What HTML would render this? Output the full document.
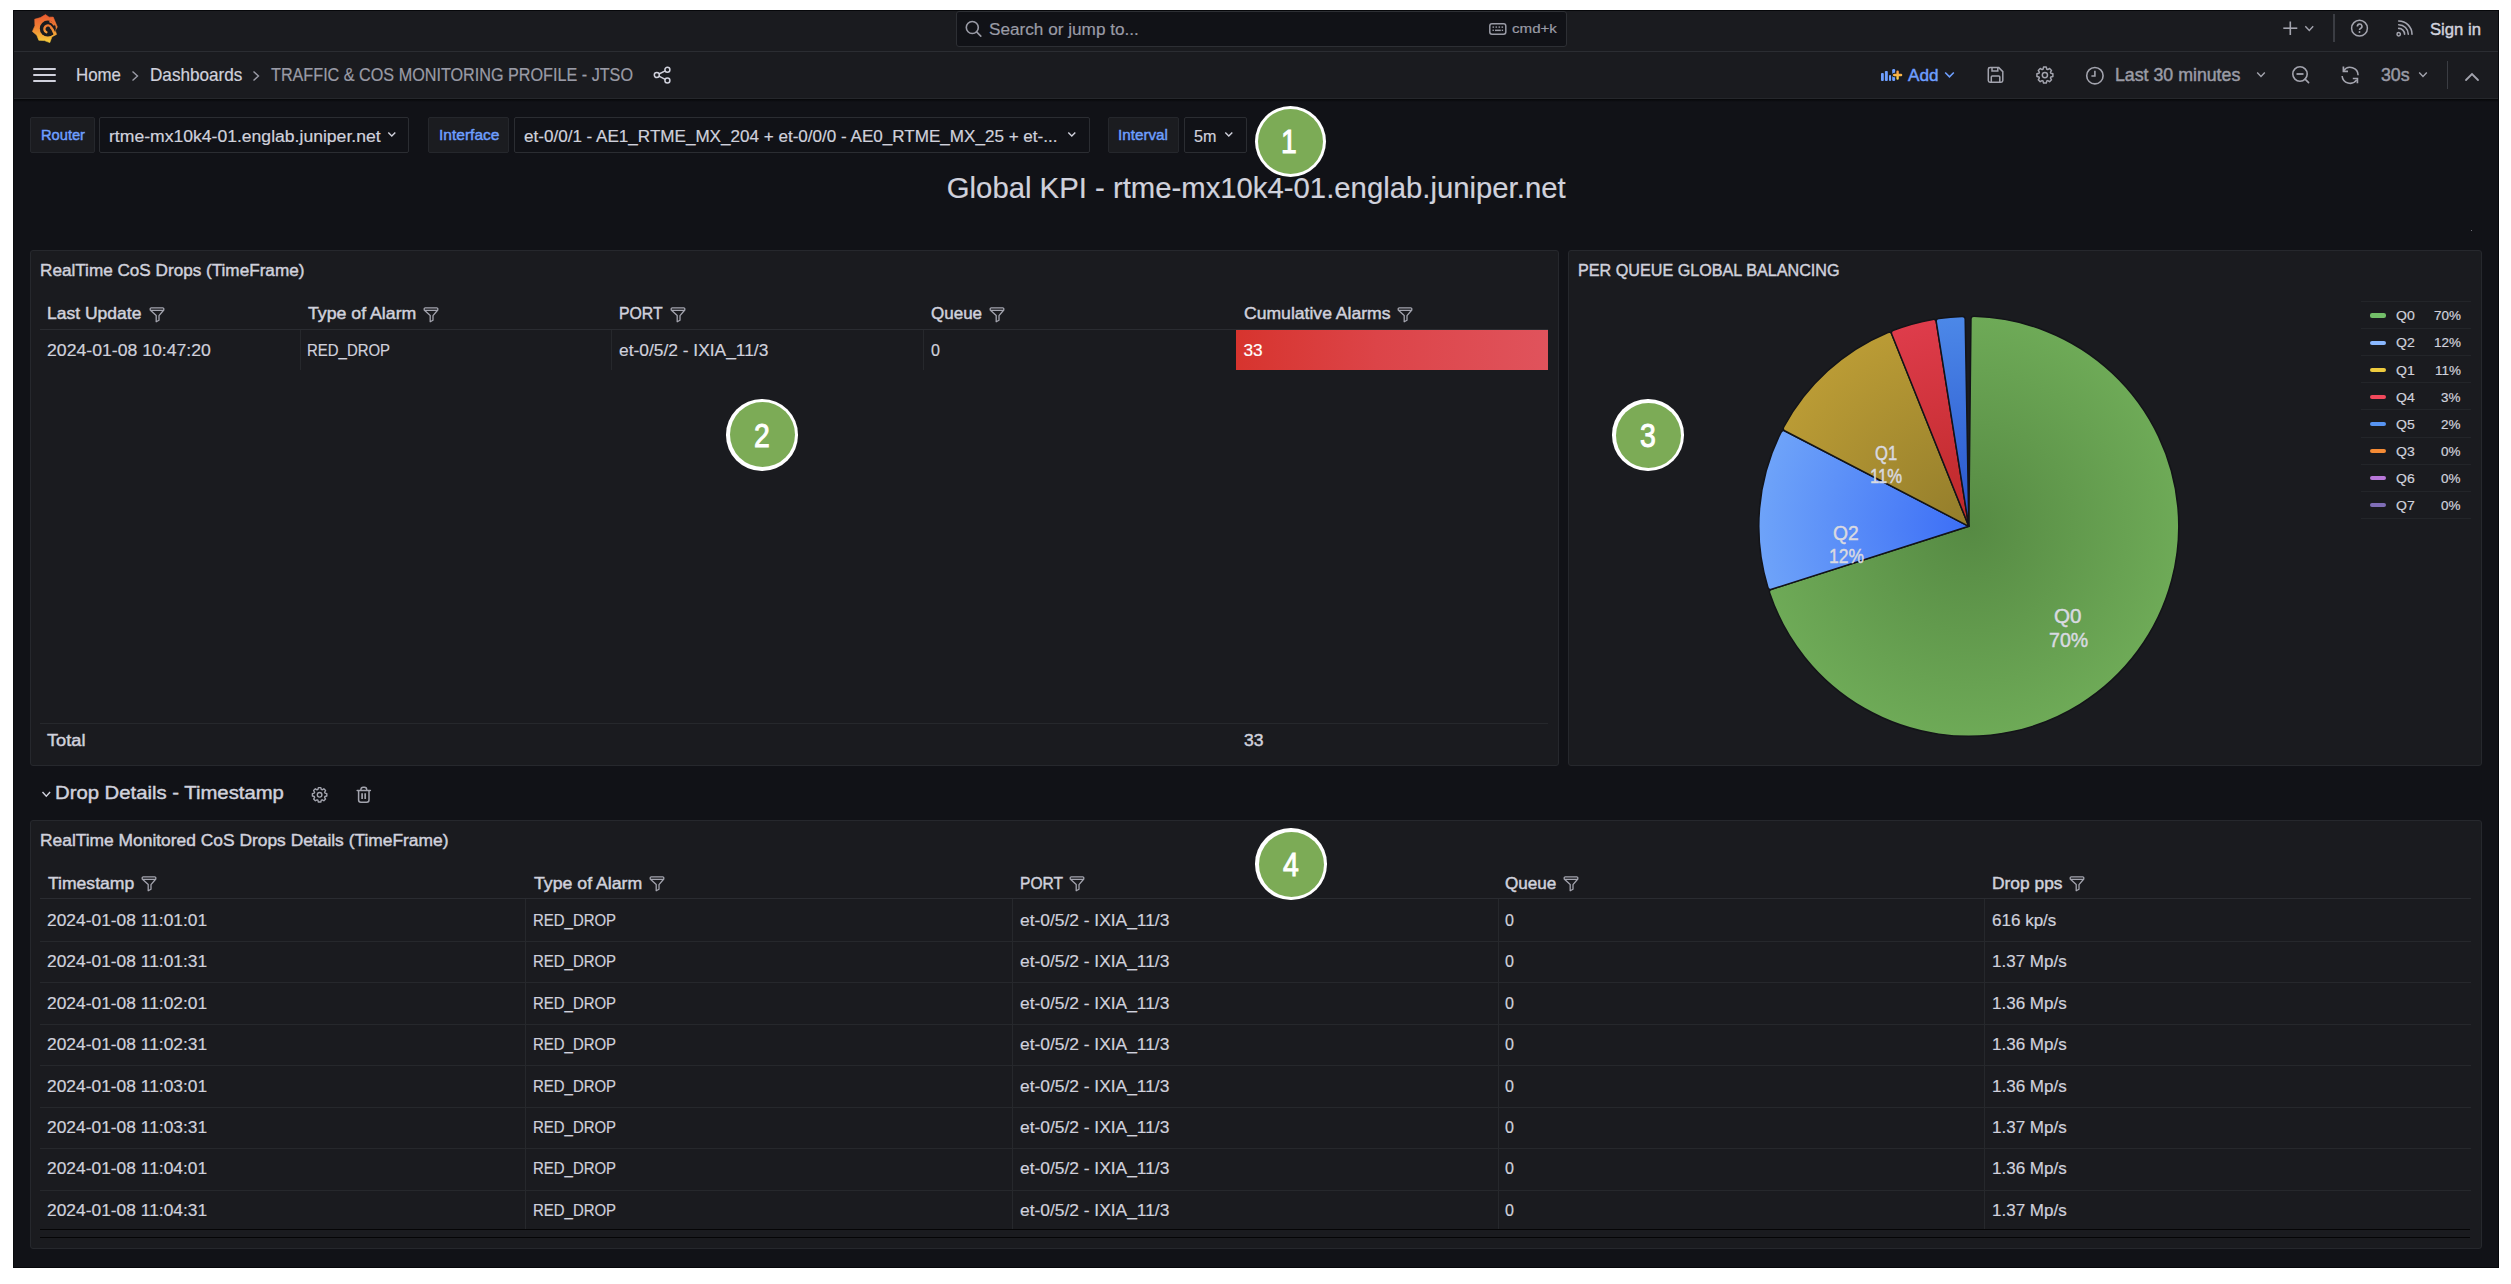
<!DOCTYPE html>
<html><head><meta charset="utf-8"><title>Grafana</title>
<style>
html,body{margin:0;padding:0;background:#ffffff;width:2511px;height:1284px;overflow:hidden;position:relative;font-family:'Liberation Sans', sans-serif;}
.a{position:absolute;}
.t{position:absolute;white-space:pre;transform-origin:0 0;font-family:'Liberation Sans', sans-serif;}
svg.a{overflow:visible;}
</style></head><body>
<div class="a" style="left:13px;top:10px;width:2486px;height:1258px;background:#111217;"></div>
<div class="a" style="left:13px;top:10px;width:2486px;height:41px;background:#1a1b1f;"></div>
<div class="a" style="left:13px;top:51px;width:2486px;height:1px;background:#2b2d32;"></div>
<div class="a" style="left:13px;top:52px;width:2486px;height:46px;background:#1a1b1f;"></div>
<div class="a" style="left:13px;top:98px;width:2486px;height:1px;background:#25272b;"></div>
<div class="a" style="left:13px;top:99px;width:2486px;height:3px;background:linear-gradient(#060709, #111217);"></div>
<svg class="a" style="left:31.5px;top:14px;" width="26" height="29" viewBox="0 0 26 29"><defs><linearGradient id="lg" gradientUnits="userSpaceOnUse" x1="0" y1="0" x2="0" y2="29"><stop offset="0" stop-color="#ea5a30"/><stop offset="0.45" stop-color="#f07f34"/><stop offset="1" stop-color="#f7d23c"/></linearGradient></defs><polygon points="13.50,0.60 17.07,3.15 21.20,3.10 23.25,8.00 25.30,12.90 23.3,16.4 24.50,20.40 19.97,22.82 17.80,28.60 12.45,26.58 6.80,26.30 4.79,21.14 0.40,17.50 2.92,11.74 2.70,5.20 8.48,3.61" fill="url(#lg)" stroke="url(#lg)" stroke-width="0.6" stroke-linejoin="round"/><circle cx="15.8" cy="14.55" r="8.0" fill="#1a1b1f"/><path d="M18.97,13.22 A3.55,3.55 0 1 0 14.40,18.22" fill="none" stroke="url(#lg)" stroke-width="2.3" stroke-linecap="round"/><path d="M18.97,13.2 Q21.2,15.8 22.0,18.6 L23.2,20.6" fill="none" stroke="url(#lg)" stroke-width="2.4"/><path d="M17.32,7.41 A7.3,7.3 0 0 1 22.36,11.35" fill="none" stroke="url(#lg)" stroke-width="1.6"/></svg>
<div class="a" style="left:955.5px;top:11px;width:611px;height:36px;background:#111217;border:1px solid #2d2f34;box-sizing:border-box;border-radius:3px;"></div>
<svg class="a" style="left:965px;top:20px;" width="18" height="18" viewBox="0 0 18 18"><circle cx="7.3" cy="7.5" r="6" fill="none" stroke="#9a9ba6" stroke-width="1.6"/><line x1="11.6" y1="11.9" x2="15.8" y2="16.1" stroke="#9a9ba6" stroke-width="1.6" stroke-linecap="round"/></svg>
<span class="t" style="left:988.90px;top:21.00px;font-size:17.3px;line-height:17.3px;color:#9a9ba6;font-weight:400;-webkit-text-stroke:0.2px #9a9ba6;transform:scaleX(0.9939);">Search or jump to...</span>
<svg class="a" style="left:1488.5px;top:22.5px;" width="18" height="12" viewBox="0 0 18 12"><rect x="0.8" y="0.8" width="16" height="10.4" rx="2.2" fill="none" stroke="#9a9ba6" stroke-width="1.5"/><rect x="3.5" y="3.4" width="1.6" height="1.4" fill="#9a9ba6"/><rect x="6.5" y="3.4" width="1.6" height="1.4" fill="#9a9ba6"/><rect x="9.5" y="3.4" width="1.6" height="1.4" fill="#9a9ba6"/><rect x="12.5" y="3.4" width="1.6" height="1.4" fill="#9a9ba6"/><rect x="3.5" y="6.6" width="1.4" height="1.4" fill="#9a9ba6"/><rect x="6" y="6.6" width="5.8" height="1.5" fill="#9a9ba6"/><rect x="12.7" y="6.6" width="1.4" height="1.4" fill="#9a9ba6"/></svg>
<span class="t" style="left:1511.60px;top:22.00px;font-size:13.5px;line-height:13.5px;color:#9a9ba6;font-weight:400;-webkit-text-stroke:0.2px #9a9ba6;transform:scaleX(1.1186);">cmd+k</span>
<svg class="a" style="left:2282px;top:20px;" width="34" height="17" viewBox="0 0 34 17"><line x1="1.3" y1="8.2" x2="15.3" y2="8.2" stroke="#a3a4ae" stroke-width="1.6"/><line x1="8.3" y1="1.5" x2="8.3" y2="15" stroke="#a3a4ae" stroke-width="1.6"/><polyline points="23.3,6.3 27.3,10.5 31.2,6.3" fill="none" stroke="#a3a4ae" stroke-width="1.4"/></svg>
<div class="a" style="left:2333.4px;top:14px;width:1.3px;height:28px;background:#3b3d43;"></div>
<svg class="a" style="left:2350px;top:19px;" width="19" height="19" viewBox="0 0 19 19"><circle cx="9.5" cy="9.2" r="7.9" fill="none" stroke="#a3a4ae" stroke-width="1.5"/><path d="M7.35,7.4 A2.3,2.3 0 1 1 10.5,9.5 Q9.5,10 9.5,11" fill="none" stroke="#a3a4ae" stroke-width="1.6"/><circle cx="9.5" cy="13.0" r="0.95" fill="#a3a4ae"/></svg>
<svg class="a" style="left:2395px;top:19px;" width="19" height="19" viewBox="0 0 19 19"><circle cx="3.7" cy="15.3" r="1.7" fill="none" stroke="#a3a4ae" stroke-width="1.5"/><path d="M3.7,9.4 A5.9,5.9 0 0 1 9.6,15.3" fill="none" stroke="#a3a4ae" stroke-width="1.6" stroke-linecap="round"/><path d="M3.7,5.7 A9.6,9.6 0 0 1 13.3,15.3" fill="none" stroke="#a3a4ae" stroke-width="1.6" stroke-linecap="round"/><path d="M3.7,2.0 A13.3,13.3 0 0 1 17.0,15.3" fill="none" stroke="#a3a4ae" stroke-width="1.6" stroke-linecap="round"/></svg>
<span class="t" style="left:2430.00px;top:21.00px;font-size:17.2px;line-height:17.2px;color:#d0d1dc;font-weight:400;-webkit-text-stroke:0.45px #d0d1dc;transform:scaleX(0.9703);">Sign in</span>
<div class="a" style="left:32.5px;top:68.0px;width:23.1px;height:2.4px;background:#d0d1dc;border-radius:1.2px;"></div>
<div class="a" style="left:32.5px;top:73.8px;width:23.1px;height:2.4px;background:#d0d1dc;border-radius:1.2px;"></div>
<div class="a" style="left:32.5px;top:79.5px;width:23.1px;height:2.4px;background:#d0d1dc;border-radius:1.2px;"></div>
<span class="t" style="left:76.30px;top:67.00px;font-size:17.9px;line-height:17.9px;color:#d0d1dc;font-weight:400;-webkit-text-stroke:0.2px #d0d1dc;transform:scaleX(0.9427);">Home</span>
<svg class="a" style="left:131px;top:70px;" width="9" height="12" viewBox="0 0 9 12"><polyline points="1.5,1.5 6.5,6 1.5,10.5" fill="none" stroke="#9a9ba6" stroke-width="1.4"/></svg>
<span class="t" style="left:150.00px;top:67.00px;font-size:17.9px;line-height:17.9px;color:#d0d1dc;font-weight:400;-webkit-text-stroke:0.2px #d0d1dc;transform:scaleX(0.9578);">Dashboards</span>
<svg class="a" style="left:252px;top:70px;" width="9" height="12" viewBox="0 0 9 12"><polyline points="1.5,1.5 6.5,6 1.5,10.5" fill="none" stroke="#9a9ba6" stroke-width="1.4"/></svg>
<span class="t" style="left:271.00px;top:67.00px;font-size:17.9px;line-height:17.9px;color:#9a9ba6;font-weight:400;-webkit-text-stroke:0.2px #9a9ba6;transform:scaleX(0.9044);">TRAFFIC &amp; COS MONITORING PROFILE - JTSO</span>
<svg class="a" style="left:652px;top:65px;" width="20" height="20" viewBox="0 0 20 20"><circle cx="4.8" cy="10.1" r="2.5" fill="none" stroke="#d0d1dc" stroke-width="1.5"/><circle cx="15.4" cy="4.8" r="2.5" fill="none" stroke="#d0d1dc" stroke-width="1.5"/><circle cx="15.4" cy="15.4" r="2.5" fill="none" stroke="#d0d1dc" stroke-width="1.5"/><line x1="7" y1="9" x2="13.2" y2="5.9" stroke="#d0d1dc" stroke-width="1.5"/><line x1="7" y1="11.2" x2="13.2" y2="14.3" stroke="#d0d1dc" stroke-width="1.5"/></svg>
<svg class="a" style="left:1880px;top:68px;" width="24" height="15" viewBox="0 0 24 15"><defs><linearGradient id="og" x1="0" y1="0" x2="0" y2="1"><stop offset="0" stop-color="#f79a45"/><stop offset="1" stop-color="#fcd04a"/></linearGradient></defs><rect x="1" y="5" width="2.8" height="8" rx="0.9" fill="#6e9fff"/><rect x="4.9" y="2.9" width="2.9" height="10.1" rx="0.9" fill="#6e9fff"/><rect x="9" y="7" width="2.1" height="6" rx="0.9" fill="#6e9fff"/><rect x="12.2" y="1.1" width="3" height="11.9" rx="1.2" fill="#6e9fff"/><path d="M17.6,3.6 V10.5 M14.2,7 H21.1" stroke="#1a1b1f" stroke-width="4.4" stroke-linecap="round"/><path d="M17.6,3.6 V10.5 M14.2,7 H21.1" stroke="url(#og)" stroke-width="2.4" stroke-linecap="round"/></svg>
<span class="t" style="left:1908.00px;top:67.00px;font-size:17.3px;line-height:17.3px;color:#6e9fff;font-weight:400;-webkit-text-stroke:0.45px #6e9fff;transform:scaleX(0.9919);">Add</span>
<svg class="a" style="left:1944px;top:71px;" width="12" height="8" viewBox="0 0 12 8"><polyline points="1.2,1.5 5.5,5.8 9.8,1.5" fill="none" stroke="#6e9fff" stroke-width="1.6"/></svg>
<svg class="a" style="left:1986.5px;top:66px;" width="18" height="18" viewBox="0 0 18 18"><path d="M3,1.6 H11.8 L15.8,5.6 V14.6 A1.7,1.7 0 0 1 14.1,16.3 H3 A1.7,1.7 0 0 1 1.3,14.6 V3.3 A1.7,1.7 0 0 1 3,1.6 Z" fill="none" stroke="#a3a4ae" stroke-width="1.5"/><path d="M5,1.8 V5 H10.8 V1.8" fill="none" stroke="#a3a4ae" stroke-width="1.5"/><path d="M4.3,16.2 V11 A1,1 0 0 1 5.3,10 H11.8 A1,1 0 0 1 12.8,11 V16.2" fill="none" stroke="#a3a4ae" stroke-width="1.5"/></svg>
<svg class="a" style="left:2035px;top:66px;" width="20" height="20" viewBox="0 0 20 20"><polygon points="8.00,3.20 8.53,1.12 11.27,1.12 11.80,3.20 12.73,3.58 14.58,2.49 16.51,4.42 15.42,6.27 15.80,7.20 17.88,7.73 17.88,10.47 15.80,11.00 15.42,11.93 16.51,13.78 14.58,15.71 12.73,14.62 11.80,15.00 11.27,17.08 8.53,17.08 8.00,15.00 7.07,14.62 5.22,15.71 3.29,13.78 4.38,11.93 4.00,11.00 1.92,10.47 1.92,7.73 4.00,7.20 4.38,6.27 3.29,4.42 5.22,2.49 7.07,3.58" fill="none" stroke="#a3a4ae" stroke-width="1.5" stroke-linejoin="round"/><circle cx="9.9" cy="9.1" r="2.6" fill="none" stroke="#a3a4ae" stroke-width="1.5"/></svg>
<svg class="a" style="left:2084.5px;top:65.5px;" width="20" height="20" viewBox="0 0 20 20"><circle cx="9.9" cy="9.7" r="8.2" fill="none" stroke="#a3a4ae" stroke-width="1.6"/><polyline points="9.9,4.8 9.9,10 6.4,10" fill="none" stroke="#a3a4ae" stroke-width="1.6"/></svg>
<span class="t" style="left:2115.00px;top:67.00px;font-size:17.5px;line-height:17.5px;color:#9a9ba6;font-weight:400;-webkit-text-stroke:0.45px #9a9ba6;transform:scaleX(1.0142);">Last 30 minutes</span>
<svg class="a" style="left:2256px;top:71px;" width="11" height="8" viewBox="0 0 11 8"><polyline points="1.2,1.5 5,5.5 8.8,1.5" fill="none" stroke="#a3a4ae" stroke-width="1.4"/></svg>
<svg class="a" style="left:2290.5px;top:64.8px;" width="20" height="20" viewBox="0 0 20 20"><circle cx="9" cy="9" r="7.2" fill="none" stroke="#a3a4ae" stroke-width="1.6"/><line x1="5.5" y1="9" x2="12.5" y2="9" stroke="#a3a4ae" stroke-width="1.8"/><line x1="14.1" y1="14.1" x2="17.6" y2="17.6" stroke="#a3a4ae" stroke-width="1.6" stroke-linecap="round"/></svg>
<svg class="a" style="left:2338px;top:63px;" width="24" height="24" viewBox="0 0 24 24"><path d="M5.55,7.7 A8,8 0 0 1 20.1,12.3" fill="none" stroke="#a3a4ae" stroke-width="1.6"/><path d="M4.13,13 A8,8 0 0 0 18.65,16.9" fill="none" stroke="#a3a4ae" stroke-width="1.6"/><polyline points="5.4,3.6 5.4,8.4 10,8.4" fill="none" stroke="#a3a4ae" stroke-width="1.7"/><polyline points="14.8,15.5 19.4,15.5 19.4,20.3" fill="none" stroke="#a3a4ae" stroke-width="1.7"/></svg>
<span class="t" style="left:2380.60px;top:67.00px;font-size:17.5px;line-height:17.5px;color:#9a9ba6;font-weight:400;-webkit-text-stroke:0.45px #9a9ba6;transform:scaleX(1.0135);">30s</span>
<svg class="a" style="left:2418px;top:71px;" width="11" height="8" viewBox="0 0 11 8"><polyline points="1.2,1.5 5,5.5 8.8,1.5" fill="none" stroke="#a3a4ae" stroke-width="1.4"/></svg>
<div class="a" style="left:2447.2px;top:61px;width:1.3px;height:27.5px;background:#3b3d43;"></div>
<svg class="a" style="left:2464px;top:72px;" width="16" height="10" viewBox="0 0 16 10"><polyline points="2,8 8,2 14,8" fill="none" stroke="#a3a4ae" stroke-width="1.8" stroke-linecap="round"/></svg>
<div class="a" style="left:30.4px;top:116.8px;width:64.5px;height:36.3px;background:#1b1c20;border:1px solid #25272c;box-sizing:border-box;border-radius:2px;"></div>
<span class="t" style="left:40.60px;top:127.00px;font-size:15px;line-height:15px;color:#6e9fff;font-weight:400;-webkit-text-stroke:0.45px #6e9fff;transform:scaleX(0.9771);">Router</span>
<div class="a" style="left:99.2px;top:116.8px;width:310.3px;height:36.3px;background:#111217;border:1px solid #2b2d32;box-sizing:border-box;border-radius:2px;"></div>
<span class="t" style="left:109.20px;top:129.00px;font-size:16.8px;line-height:16.8px;color:#d0d1dc;font-weight:400;-webkit-text-stroke:0.2px #d0d1dc;transform:scaleX(1.0473);">rtme-mx10k4-01.englab.juniper.net</span>
<svg class="a" style="left:386.5px;top:131px;" width="10" height="8" viewBox="0 0 10 8"><polyline points="1.3,1.5 4.8,5 8.3,1.5" fill="none" stroke="#d0d1dc" stroke-width="1.4"/></svg>
<div class="a" style="left:428.3px;top:116.8px;width:80.7px;height:36.3px;background:#1b1c20;border:1px solid #25272c;box-sizing:border-box;border-radius:2px;"></div>
<span class="t" style="left:438.50px;top:127.00px;font-size:15px;line-height:15px;color:#6e9fff;font-weight:400;-webkit-text-stroke:0.45px #6e9fff;transform:scaleX(1.0364);">Interface</span>
<div class="a" style="left:514.1px;top:116.8px;width:576.4px;height:36.3px;background:#111217;border:1px solid #2b2d32;box-sizing:border-box;border-radius:2px;"></div>
<span class="t" style="left:524.10px;top:129.00px;font-size:16.8px;line-height:16.8px;color:#d0d1dc;font-weight:400;-webkit-text-stroke:0.2px #d0d1dc;transform:scaleX(1.0171);">et-0/0/1 - AE1_RTME_MX_204 + et-0/0/0 - AE0_RTME_MX_25 + et-...</span>
<svg class="a" style="left:1067px;top:131px;" width="10" height="8" viewBox="0 0 10 8"><polyline points="1.3,1.5 4.8,5 8.3,1.5" fill="none" stroke="#d0d1dc" stroke-width="1.4"/></svg>
<div class="a" style="left:1108px;top:116.8px;width:71px;height:36.3px;background:#1b1c20;border:1px solid #25272c;box-sizing:border-box;border-radius:2px;"></div>
<span class="t" style="left:1118.20px;top:127.00px;font-size:15px;line-height:15px;color:#6e9fff;font-weight:400;-webkit-text-stroke:0.45px #6e9fff;transform:scaleX(1.0162);">Interval</span>
<div class="a" style="left:1184px;top:116.8px;width:62.5px;height:36.3px;background:#111217;border:1px solid #2b2d32;box-sizing:border-box;border-radius:2px;"></div>
<span class="t" style="left:1194.00px;top:129.00px;font-size:16.8px;line-height:16.8px;color:#d0d1dc;font-weight:400;-webkit-text-stroke:0.2px #d0d1dc;transform:scaleX(0.9609);">5m</span>
<svg class="a" style="left:1224px;top:131px;" width="10" height="8" viewBox="0 0 10 8"><polyline points="1.3,1.5 4.8,5 8.3,1.5" fill="none" stroke="#d0d1dc" stroke-width="1.4"/></svg>
<span class="t" style="left:946.80px;top:173.00px;font-size:29.3px;line-height:29.3px;color:#d0d1dc;font-weight:400;-webkit-text-stroke:0.2px #d0d1dc;">Global KPI - rtme-mx10k4-01.englab.juniper.net</span>
<div class="a" style="left:2470.6px;top:229.6px;width:1.6px;height:1.6px;background:#8a8b95;border-radius:1px;"></div>
<div class="a" style="left:30.3px;top:250px;width:1529px;height:516px;background:#1a1b1f;border:1px solid #26282d;box-sizing:border-box;border-radius:3px;"></div>
<span class="t" style="left:40.00px;top:262.00px;font-size:17.4px;line-height:17.4px;color:#d0d1dc;font-weight:400;-webkit-text-stroke:0.45px #d0d1dc;transform:scaleX(0.9854);">RealTime CoS Drops (TimeFrame)</span>
<span class="t" style="left:47.30px;top:305.00px;font-size:17px;line-height:17px;color:#d0d1dc;font-weight:400;-webkit-text-stroke:0.45px #d0d1dc;transform:scaleX(1.0296);">Last Update</span>
<svg class="a" style="left:148.5px;top:306.8px;" width="16" height="16" viewBox="0 0 16 16"><path d="M1.2,1.8 A1,1 0 0 1 2.2,0.8 H13.8 A1,1 0 0 1 14.8,1.8 V3 L10,8.6 V13.2 L7.2,14.8 V8.6 L1.2,3 Z M1.5,3.4 H14.5" fill="none" stroke="#a3a4ae" stroke-width="1.3" stroke-linejoin="round"/></svg>
<span class="t" style="left:307.70px;top:305.00px;font-size:17px;line-height:17px;color:#d0d1dc;font-weight:400;-webkit-text-stroke:0.45px #d0d1dc;transform:scaleX(1.0420);">Type of Alarm</span>
<svg class="a" style="left:423px;top:306.8px;" width="16" height="16" viewBox="0 0 16 16"><path d="M1.2,1.8 A1,1 0 0 1 2.2,0.8 H13.8 A1,1 0 0 1 14.8,1.8 V3 L10,8.6 V13.2 L7.2,14.8 V8.6 L1.2,3 Z M1.5,3.4 H14.5" fill="none" stroke="#a3a4ae" stroke-width="1.3" stroke-linejoin="round"/></svg>
<span class="t" style="left:619.00px;top:305.00px;font-size:17px;line-height:17px;color:#d0d1dc;font-weight:400;-webkit-text-stroke:0.45px #d0d1dc;transform:scaleX(0.9292);">PORT</span>
<svg class="a" style="left:669.6px;top:306.8px;" width="16" height="16" viewBox="0 0 16 16"><path d="M1.2,1.8 A1,1 0 0 1 2.2,0.8 H13.8 A1,1 0 0 1 14.8,1.8 V3 L10,8.6 V13.2 L7.2,14.8 V8.6 L1.2,3 Z M1.5,3.4 H14.5" fill="none" stroke="#a3a4ae" stroke-width="1.3" stroke-linejoin="round"/></svg>
<span class="t" style="left:931.00px;top:305.00px;font-size:17px;line-height:17px;color:#d0d1dc;font-weight:400;-webkit-text-stroke:0.45px #d0d1dc;">Queue</span>
<svg class="a" style="left:988.6px;top:306.8px;" width="16" height="16" viewBox="0 0 16 16"><path d="M1.2,1.8 A1,1 0 0 1 2.2,0.8 H13.8 A1,1 0 0 1 14.8,1.8 V3 L10,8.6 V13.2 L7.2,14.8 V8.6 L1.2,3 Z M1.5,3.4 H14.5" fill="none" stroke="#a3a4ae" stroke-width="1.3" stroke-linejoin="round"/></svg>
<span class="t" style="left:1243.50px;top:305.00px;font-size:17px;line-height:17px;color:#d0d1dc;font-weight:400;-webkit-text-stroke:0.45px #d0d1dc;transform:scaleX(1.0337);">Cumulative Alarms</span>
<svg class="a" style="left:1397px;top:306.8px;" width="16" height="16" viewBox="0 0 16 16"><path d="M1.2,1.8 A1,1 0 0 1 2.2,0.8 H13.8 A1,1 0 0 1 14.8,1.8 V3 L10,8.6 V13.2 L7.2,14.8 V8.6 L1.2,3 Z M1.5,3.4 H14.5" fill="none" stroke="#a3a4ae" stroke-width="1.3" stroke-linejoin="round"/></svg>
<div class="a" style="left:40px;top:329px;width:1508px;height:1px;background:#2a2c31;"></div>
<div class="a" style="left:299.6px;top:330px;width:1px;height:40px;background:#26282c;"></div>
<div class="a" style="left:611px;top:330px;width:1px;height:40px;background:#26282c;"></div>
<div class="a" style="left:923px;top:330px;width:1px;height:40px;background:#26282c;"></div>
<div class="a" style="left:1236px;top:330px;width:312px;height:40px;background:linear-gradient(90deg,#d7342e 0%,#dc4448 45%,#e0535c 100%);"></div>
<span class="t" style="left:47.10px;top:342.00px;font-size:17.3px;line-height:17.3px;color:#d0d1dc;font-weight:400;-webkit-text-stroke:0.2px #d0d1dc;transform:scaleX(1.0214);">2024-01-08 10:47:20</span>
<span class="t" style="left:307.10px;top:342.00px;font-size:17.3px;line-height:17.3px;color:#d0d1dc;font-weight:400;-webkit-text-stroke:0.2px #d0d1dc;transform:scaleX(0.8653);">RED_DROP</span>
<span class="t" style="left:619.00px;top:342.00px;font-size:17.3px;line-height:17.3px;color:#d0d1dc;font-weight:400;-webkit-text-stroke:0.2px #d0d1dc;transform:scaleX(1.0049);">et-0/5/2 - IXIA_11/3</span>
<span class="t" style="left:931.00px;top:342.00px;font-size:17.3px;line-height:17.3px;color:#d0d1dc;font-weight:400;-webkit-text-stroke:0.2px #d0d1dc;transform:scaleX(0.9300);">0</span>
<span class="t" style="left:1243.50px;top:342.00px;font-size:17.3px;line-height:17.3px;color:#ffffff;font-weight:400;-webkit-text-stroke:0.2px #ffffff;">33</span>
<div class="a" style="left:40px;top:723.3px;width:1508px;height:1px;background:#26282c;"></div>
<span class="t" style="left:47.00px;top:732.00px;font-size:17.3px;line-height:17.3px;color:#d0d1dc;font-weight:400;-webkit-text-stroke:0.45px #d0d1dc;transform:scaleX(1.0543);">Total</span>
<span class="t" style="left:1243.50px;top:732.00px;font-size:17.3px;line-height:17.3px;color:#d0d1dc;font-weight:400;-webkit-text-stroke:0.45px #d0d1dc;transform:scaleX(1.0138);">33</span>
<div class="a" style="left:1568px;top:250px;width:914px;height:516px;background:#1a1b1f;border:1px solid #26282d;box-sizing:border-box;border-radius:3px;"></div>
<span class="t" style="left:1578.00px;top:262.00px;font-size:17.4px;line-height:17.4px;color:#d0d1dc;font-weight:400;-webkit-text-stroke:0.45px #d0d1dc;transform:scaleX(0.9291);">PER QUEUE GLOBAL BALANCING</span>
<svg class="a" style="left:0;top:0" width="2511" height="1284" viewBox="0 0 2511 1284"><defs><radialGradient id="pg0" gradientUnits="userSpaceOnUse" cx="1968.8" cy="526.3" r="210"><stop offset="0" stop-color="#568a43"/><stop offset="1" stop-color="#6eaa57"/></radialGradient><radialGradient id="pg1" gradientUnits="userSpaceOnUse" cx="1968.8" cy="526.3" r="210"><stop offset="0" stop-color="#3c6ef6"/><stop offset="1" stop-color="#6ea3f9"/></radialGradient><radialGradient id="pg2" gradientUnits="userSpaceOnUse" cx="1968.8" cy="526.3" r="210"><stop offset="0" stop-color="#937d2b"/><stop offset="1" stop-color="#ba9b35"/></radialGradient><radialGradient id="pg3" gradientUnits="userSpaceOnUse" cx="1968.8" cy="526.3" r="210"><stop offset="0" stop-color="#bd2828"/><stop offset="1" stop-color="#de3c4b"/></radialGradient><radialGradient id="pg4" gradientUnits="userSpaceOnUse" cx="1968.8" cy="526.3" r="210"><stop offset="0" stop-color="#2853cc"/><stop offset="1" stop-color="#4c88e8"/></radialGradient></defs><path d="M1968.80,526.30 L1970.97,319.31 Q1971.00,316.31 1974.00,316.36 A210,210 0 1 1 1769.67,593.00 Q1768.74,590.15 1771.60,589.23 Z" fill="url(#pg0)" stroke="#131418" stroke-width="1.5" stroke-linejoin="round"/><path d="M1968.80,526.30 L1771.60,589.23 Q1768.74,590.15 1767.85,587.28 A210,210 0 0 1 1781.00,432.33 Q1782.36,429.66 1785.02,431.04 Z" fill="url(#pg1)" stroke="#131418" stroke-width="1.5" stroke-linejoin="round"/><path d="M1968.80,526.30 L1785.02,431.04 Q1782.36,429.66 1783.76,427.00 A210,210 0 0 1 1887.87,332.52 Q1890.64,331.39 1891.76,334.17 Z" fill="url(#pg2)" stroke="#131418" stroke-width="1.5" stroke-linejoin="round"/><path d="M1968.80,526.30 L1891.76,334.17 Q1890.64,331.39 1893.43,330.29 A210,210 0 0 1 1932.84,319.40 Q1935.80,318.91 1936.28,321.87 Z" fill="url(#pg3)" stroke="#131418" stroke-width="1.5" stroke-linejoin="round"/><path d="M1968.80,526.30 L1936.28,321.87 Q1935.80,318.91 1938.77,318.46 A210,210 0 0 1 1962.14,316.41 Q1965.13,316.33 1965.19,319.33 Z" fill="url(#pg4)" stroke="#131418" stroke-width="1.5" stroke-linejoin="round"/></svg>
<span class="t" style="left:1874.90px;top:443.00px;font-size:20.5px;line-height:20.5px;color:#d9dae1;font-weight:400;-webkit-text-stroke:0.45px #d9dae1;transform:scaleX(0.8114);">Q1</span>
<span class="t" style="left:1870.20px;top:466.00px;font-size:20.5px;line-height:20.5px;color:#d9dae1;font-weight:400;-webkit-text-stroke:0.45px #d9dae1;transform:scaleX(0.8149);">11%</span>
<span class="t" style="left:1833.35px;top:523.00px;font-size:20.5px;line-height:20.5px;color:#d9dae1;font-weight:400;-webkit-text-stroke:0.45px #d9dae1;transform:scaleX(0.9393);">Q2</span>
<span class="t" style="left:1828.80px;top:546.00px;font-size:20.5px;line-height:20.5px;color:#d9dae1;font-weight:400;-webkit-text-stroke:0.45px #d9dae1;transform:scaleX(0.8530);">12%</span>
<span class="t" style="left:2054.05px;top:606.00px;font-size:20.5px;line-height:20.5px;color:#d9dae1;font-weight:400;-webkit-text-stroke:0.45px #d9dae1;transform:scaleX(1.0051);">Q0</span>
<span class="t" style="left:2048.60px;top:630.00px;font-size:20.5px;line-height:20.5px;color:#d9dae1;font-weight:400;-webkit-text-stroke:0.45px #d9dae1;transform:scaleX(0.9554);">70%</span>
<div class="a" style="left:2361px;top:301px;width:110px;height:1px;background:#232529;"></div>
<div class="a" style="left:2370px;top:313.4px;width:16px;height:4.2px;background:#73bf69;border-radius:2.1px;"></div>
<span class="t" style="left:2395.50px;top:309.00px;font-size:13.6px;line-height:13.6px;color:#d0d1dc;font-weight:400;-webkit-text-stroke:0.2px #d0d1dc;transform:scaleX(1.0308);">Q0</span>
<span class="t" style="left:2433.65px;top:309.00px;font-size:13.6px;line-height:13.6px;color:#d0d1dc;font-weight:400;-webkit-text-stroke:0.2px #d0d1dc;transform:scaleX(0.9900);">70%</span>
<div class="a" style="left:2361px;top:328.1px;width:110px;height:1px;background:#232529;"></div>
<div class="a" style="left:2370px;top:340.5px;width:16px;height:4.2px;background:#8ab8ff;border-radius:2.1px;"></div>
<span class="t" style="left:2395.50px;top:336.00px;font-size:13.6px;line-height:13.6px;color:#d0d1dc;font-weight:400;-webkit-text-stroke:0.2px #d0d1dc;transform:scaleX(1.0308);">Q2</span>
<span class="t" style="left:2433.65px;top:336.00px;font-size:13.6px;line-height:13.6px;color:#d0d1dc;font-weight:400;-webkit-text-stroke:0.2px #d0d1dc;transform:scaleX(0.9900);">12%</span>
<div class="a" style="left:2361px;top:355.20000000000005px;width:110px;height:1px;background:#232529;"></div>
<div class="a" style="left:2370px;top:367.59999999999997px;width:16px;height:4.2px;background:#eecb3e;border-radius:2.1px;"></div>
<span class="t" style="left:2395.50px;top:364.00px;font-size:13.6px;line-height:13.6px;color:#d0d1dc;font-weight:400;-webkit-text-stroke:0.2px #d0d1dc;transform:scaleX(1.0308);">Q1</span>
<span class="t" style="left:2434.66px;top:364.00px;font-size:13.6px;line-height:13.6px;color:#d0d1dc;font-weight:400;-webkit-text-stroke:0.2px #d0d1dc;transform:scaleX(0.9900);">11%</span>
<div class="a" style="left:2361px;top:382.3px;width:110px;height:1px;background:#232529;"></div>
<div class="a" style="left:2370px;top:394.7px;width:16px;height:4.2px;background:#f2495c;border-radius:2.1px;"></div>
<span class="t" style="left:2395.50px;top:391.00px;font-size:13.6px;line-height:13.6px;color:#d0d1dc;font-weight:400;-webkit-text-stroke:0.2px #d0d1dc;transform:scaleX(1.0308);">Q4</span>
<span class="t" style="left:2441.14px;top:391.00px;font-size:13.6px;line-height:13.6px;color:#d0d1dc;font-weight:400;-webkit-text-stroke:0.2px #d0d1dc;transform:scaleX(0.9900);">3%</span>
<div class="a" style="left:2361px;top:409.40000000000003px;width:110px;height:1px;background:#232529;"></div>
<div class="a" style="left:2370px;top:421.79999999999995px;width:16px;height:4.2px;background:#5794f2;border-radius:2.1px;"></div>
<span class="t" style="left:2395.50px;top:418.00px;font-size:13.6px;line-height:13.6px;color:#d0d1dc;font-weight:400;-webkit-text-stroke:0.2px #d0d1dc;transform:scaleX(1.0308);">Q5</span>
<span class="t" style="left:2441.14px;top:418.00px;font-size:13.6px;line-height:13.6px;color:#d0d1dc;font-weight:400;-webkit-text-stroke:0.2px #d0d1dc;transform:scaleX(0.9900);">2%</span>
<div class="a" style="left:2361px;top:436.5px;width:110px;height:1px;background:#232529;"></div>
<div class="a" style="left:2370px;top:448.9px;width:16px;height:4.2px;background:#f58b35;border-radius:2.1px;"></div>
<span class="t" style="left:2395.50px;top:445.00px;font-size:13.6px;line-height:13.6px;color:#d0d1dc;font-weight:400;-webkit-text-stroke:0.2px #d0d1dc;transform:scaleX(1.0308);">Q3</span>
<span class="t" style="left:2441.14px;top:445.00px;font-size:13.6px;line-height:13.6px;color:#d0d1dc;font-weight:400;-webkit-text-stroke:0.2px #d0d1dc;transform:scaleX(0.9900);">0%</span>
<div class="a" style="left:2361px;top:463.6px;width:110px;height:1px;background:#232529;"></div>
<div class="a" style="left:2370px;top:476.0px;width:16px;height:4.2px;background:#b877d9;border-radius:2.1px;"></div>
<span class="t" style="left:2395.50px;top:472.00px;font-size:13.6px;line-height:13.6px;color:#d0d1dc;font-weight:400;-webkit-text-stroke:0.2px #d0d1dc;transform:scaleX(1.0308);">Q6</span>
<span class="t" style="left:2441.14px;top:472.00px;font-size:13.6px;line-height:13.6px;color:#d0d1dc;font-weight:400;-webkit-text-stroke:0.2px #d0d1dc;transform:scaleX(0.9900);">0%</span>
<div class="a" style="left:2361px;top:490.70000000000005px;width:110px;height:1px;background:#232529;"></div>
<div class="a" style="left:2370px;top:503.1px;width:16px;height:4.2px;background:#806eb7;border-radius:2.1px;"></div>
<span class="t" style="left:2395.50px;top:499.00px;font-size:13.6px;line-height:13.6px;color:#d0d1dc;font-weight:400;-webkit-text-stroke:0.2px #d0d1dc;transform:scaleX(1.0308);">Q7</span>
<span class="t" style="left:2441.14px;top:499.00px;font-size:13.6px;line-height:13.6px;color:#d0d1dc;font-weight:400;-webkit-text-stroke:0.2px #d0d1dc;transform:scaleX(0.9900);">0%</span>
<div class="a" style="left:2361px;top:517.8000000000001px;width:110px;height:1px;background:#232529;"></div>
<svg class="a" style="left:40.5px;top:790px;" width="11" height="9" viewBox="0 0 11 9"><polyline points="1.5,2 5.3,6.2 9.1,2" fill="none" stroke="#d0d1dc" stroke-width="1.4"/></svg>
<span class="t" style="left:55.30px;top:783.00px;font-size:19px;line-height:19px;color:#d0d1dc;font-weight:400;-webkit-text-stroke:0.45px #d0d1dc;transform:scaleX(1.0679);">Drop Details - Timestamp</span>
<svg class="a" style="left:310px;top:785px;" width="18" height="18" viewBox="0 0 18 18"><polygon points="7.89,4.47 8.37,2.60 10.83,2.60 11.31,4.47 12.16,4.82 13.82,3.84 15.56,5.58 14.58,7.24 14.93,8.09 16.80,8.57 16.80,11.03 14.93,11.51 14.58,12.36 15.56,14.02 13.82,15.76 12.16,14.78 11.31,15.13 10.83,17.00 8.37,17.00 7.89,15.13 7.04,14.78 5.38,15.76 3.64,14.02 4.62,12.36 4.27,11.51 2.40,11.03 2.40,8.57 4.27,8.09 4.62,7.24 3.64,5.58 5.38,3.84 7.04,4.82" fill="none" stroke="#a3a4ae" stroke-width="1.4" stroke-linejoin="round"/><circle cx="9.6" cy="9.8" r="2.3" fill="none" stroke="#a3a4ae" stroke-width="1.4"/></svg>
<svg class="a" style="left:356px;top:786px;" width="16" height="18" viewBox="0 0 16 18"><path d="M1.2,4.6 H14.4" fill="none" stroke="#a3a4ae" stroke-width="1.5" stroke-linecap="round"/><path d="M4.9,4.4 V3.6 A2.3,2.3 0 0 1 7.2,1.3 H8.4 A2.3,2.3 0 0 1 10.7,3.6 V4.4" fill="none" stroke="#a3a4ae" stroke-width="1.4"/><path d="M2.6,4.8 V14 A2.2,2.2 0 0 0 4.8,16.2 H10.8 A2.2,2.2 0 0 0 13,14 V4.8" fill="none" stroke="#a3a4ae" stroke-width="1.5"/><path d="M6.1,7.3 V13 M9.2,7.3 V13" stroke="#a3a4ae" stroke-width="1.7"/></svg>
<div class="a" style="left:30.3px;top:820.4px;width:2452px;height:428.4px;background:#1a1b1f;border:1px solid #26282d;box-sizing:border-box;border-radius:3px;"></div>
<span class="t" style="left:40.00px;top:832.00px;font-size:17.4px;line-height:17.4px;color:#d0d1dc;font-weight:400;-webkit-text-stroke:0.45px #d0d1dc;">RealTime Monitored CoS Drops Details (TimeFrame)</span>
<span class="t" style="left:47.70px;top:875.00px;font-size:17px;line-height:17px;color:#d0d1dc;font-weight:400;-webkit-text-stroke:0.45px #d0d1dc;transform:scaleX(1.0329);">Timestamp</span>
<svg class="a" style="left:140.5px;top:876.1px;" width="16" height="16" viewBox="0 0 16 16"><path d="M1.2,1.8 A1,1 0 0 1 2.2,0.8 H13.8 A1,1 0 0 1 14.8,1.8 V3 L10,8.6 V13.2 L7.2,14.8 V8.6 L1.2,3 Z M1.5,3.4 H14.5" fill="none" stroke="#a3a4ae" stroke-width="1.3" stroke-linejoin="round"/></svg>
<span class="t" style="left:533.80px;top:875.00px;font-size:17px;line-height:17px;color:#d0d1dc;font-weight:400;-webkit-text-stroke:0.45px #d0d1dc;transform:scaleX(1.0410);">Type of Alarm</span>
<svg class="a" style="left:648.7px;top:876.1px;" width="16" height="16" viewBox="0 0 16 16"><path d="M1.2,1.8 A1,1 0 0 1 2.2,0.8 H13.8 A1,1 0 0 1 14.8,1.8 V3 L10,8.6 V13.2 L7.2,14.8 V8.6 L1.2,3 Z M1.5,3.4 H14.5" fill="none" stroke="#a3a4ae" stroke-width="1.3" stroke-linejoin="round"/></svg>
<span class="t" style="left:1019.60px;top:875.00px;font-size:17px;line-height:17px;color:#d0d1dc;font-weight:400;-webkit-text-stroke:0.45px #d0d1dc;transform:scaleX(0.9164);">PORT</span>
<svg class="a" style="left:1069.3px;top:876.1px;" width="16" height="16" viewBox="0 0 16 16"><path d="M1.2,1.8 A1,1 0 0 1 2.2,0.8 H13.8 A1,1 0 0 1 14.8,1.8 V3 L10,8.6 V13.2 L7.2,14.8 V8.6 L1.2,3 Z M1.5,3.4 H14.5" fill="none" stroke="#a3a4ae" stroke-width="1.3" stroke-linejoin="round"/></svg>
<span class="t" style="left:1505.40px;top:875.00px;font-size:17px;line-height:17px;color:#d0d1dc;font-weight:400;-webkit-text-stroke:0.45px #d0d1dc;transform:scaleX(1.0069);">Queue</span>
<svg class="a" style="left:1562.7px;top:876.1px;" width="16" height="16" viewBox="0 0 16 16"><path d="M1.2,1.8 A1,1 0 0 1 2.2,0.8 H13.8 A1,1 0 0 1 14.8,1.8 V3 L10,8.6 V13.2 L7.2,14.8 V8.6 L1.2,3 Z M1.5,3.4 H14.5" fill="none" stroke="#a3a4ae" stroke-width="1.3" stroke-linejoin="round"/></svg>
<span class="t" style="left:1992.00px;top:875.00px;font-size:17px;line-height:17px;color:#d0d1dc;font-weight:400;-webkit-text-stroke:0.45px #d0d1dc;transform:scaleX(1.0220);">Drop pps</span>
<svg class="a" style="left:2069px;top:876.1px;" width="16" height="16" viewBox="0 0 16 16"><path d="M1.2,1.8 A1,1 0 0 1 2.2,0.8 H13.8 A1,1 0 0 1 14.8,1.8 V3 L10,8.6 V13.2 L7.2,14.8 V8.6 L1.2,3 Z M1.5,3.4 H14.5" fill="none" stroke="#a3a4ae" stroke-width="1.3" stroke-linejoin="round"/></svg>
<div class="a" style="left:40px;top:898.3px;width:2430.5px;height:1px;background:#2a2c31;"></div>
<div class="a" style="left:40px;top:940.5px;width:2430.5px;height:1px;background:#26282c;"></div>
<div class="a" style="left:40px;top:981.7px;width:2430.5px;height:1px;background:#26282c;"></div>
<div class="a" style="left:40px;top:1023.5px;width:2430.5px;height:1px;background:#26282c;"></div>
<div class="a" style="left:40px;top:1065px;width:2430.5px;height:1px;background:#26282c;"></div>
<div class="a" style="left:40px;top:1106.5px;width:2430.5px;height:1px;background:#26282c;"></div>
<div class="a" style="left:40px;top:1148px;width:2430.5px;height:1px;background:#26282c;"></div>
<div class="a" style="left:40px;top:1189.8px;width:2430.5px;height:1px;background:#26282c;"></div>
<div class="a" style="left:525px;top:899.3px;width:1px;height:330.5px;background:#26282c;"></div>
<div class="a" style="left:1011.5px;top:899.3px;width:1px;height:330.5px;background:#26282c;"></div>
<div class="a" style="left:1498.2px;top:899.3px;width:1px;height:330.5px;background:#26282c;"></div>
<div class="a" style="left:1984.4px;top:899.3px;width:1px;height:330.5px;background:#26282c;"></div>
<div class="a" style="left:40px;top:1229.1px;width:2430px;height:1.4px;background:#050506;"></div>
<div class="a" style="left:40px;top:1236.8px;width:2430px;height:1.4px;background:#050506;"></div>
<span class="t" style="left:47.10px;top:912.00px;font-size:17.3px;line-height:17.3px;color:#d0d1dc;font-weight:400;-webkit-text-stroke:0.2px #d0d1dc;transform:scaleX(1.0061);">2024-01-08 11:01:01</span>
<span class="t" style="left:532.80px;top:912.00px;font-size:17.3px;line-height:17.3px;color:#d0d1dc;font-weight:400;-webkit-text-stroke:0.2px #d0d1dc;transform:scaleX(0.8653);">RED_DROP</span>
<span class="t" style="left:1019.50px;top:912.00px;font-size:17.3px;line-height:17.3px;color:#d0d1dc;font-weight:400;-webkit-text-stroke:0.2px #d0d1dc;transform:scaleX(1.0049);">et-0/5/2 - IXIA_11/3</span>
<span class="t" style="left:1505.40px;top:912.00px;font-size:17.3px;line-height:17.3px;color:#d0d1dc;font-weight:400;-webkit-text-stroke:0.2px #d0d1dc;transform:scaleX(0.9300);">0</span>
<span class="t" style="left:1992.00px;top:912.00px;font-size:17.3px;line-height:17.3px;color:#d0d1dc;font-weight:400;-webkit-text-stroke:0.2px #d0d1dc;transform:scaleX(0.9850);">616 kp/s</span>
<span class="t" style="left:47.10px;top:953.00px;font-size:17.3px;line-height:17.3px;color:#d0d1dc;font-weight:400;-webkit-text-stroke:0.2px #d0d1dc;transform:scaleX(1.0061);">2024-01-08 11:01:31</span>
<span class="t" style="left:532.80px;top:953.00px;font-size:17.3px;line-height:17.3px;color:#d0d1dc;font-weight:400;-webkit-text-stroke:0.2px #d0d1dc;transform:scaleX(0.8653);">RED_DROP</span>
<span class="t" style="left:1019.50px;top:953.00px;font-size:17.3px;line-height:17.3px;color:#d0d1dc;font-weight:400;-webkit-text-stroke:0.2px #d0d1dc;transform:scaleX(1.0049);">et-0/5/2 - IXIA_11/3</span>
<span class="t" style="left:1505.40px;top:953.00px;font-size:17.3px;line-height:17.3px;color:#d0d1dc;font-weight:400;-webkit-text-stroke:0.2px #d0d1dc;transform:scaleX(0.9300);">0</span>
<span class="t" style="left:1992.00px;top:953.00px;font-size:17.3px;line-height:17.3px;color:#d0d1dc;font-weight:400;-webkit-text-stroke:0.2px #d0d1dc;transform:scaleX(0.9850);">1.37 Mp/s</span>
<span class="t" style="left:47.10px;top:995.00px;font-size:17.3px;line-height:17.3px;color:#d0d1dc;font-weight:400;-webkit-text-stroke:0.2px #d0d1dc;transform:scaleX(1.0061);">2024-01-08 11:02:01</span>
<span class="t" style="left:532.80px;top:995.00px;font-size:17.3px;line-height:17.3px;color:#d0d1dc;font-weight:400;-webkit-text-stroke:0.2px #d0d1dc;transform:scaleX(0.8653);">RED_DROP</span>
<span class="t" style="left:1019.50px;top:995.00px;font-size:17.3px;line-height:17.3px;color:#d0d1dc;font-weight:400;-webkit-text-stroke:0.2px #d0d1dc;transform:scaleX(1.0049);">et-0/5/2 - IXIA_11/3</span>
<span class="t" style="left:1505.40px;top:995.00px;font-size:17.3px;line-height:17.3px;color:#d0d1dc;font-weight:400;-webkit-text-stroke:0.2px #d0d1dc;transform:scaleX(0.9300);">0</span>
<span class="t" style="left:1992.00px;top:995.00px;font-size:17.3px;line-height:17.3px;color:#d0d1dc;font-weight:400;-webkit-text-stroke:0.2px #d0d1dc;transform:scaleX(0.9850);">1.36 Mp/s</span>
<span class="t" style="left:47.10px;top:1036.00px;font-size:17.3px;line-height:17.3px;color:#d0d1dc;font-weight:400;-webkit-text-stroke:0.2px #d0d1dc;transform:scaleX(1.0061);">2024-01-08 11:02:31</span>
<span class="t" style="left:532.80px;top:1036.00px;font-size:17.3px;line-height:17.3px;color:#d0d1dc;font-weight:400;-webkit-text-stroke:0.2px #d0d1dc;transform:scaleX(0.8653);">RED_DROP</span>
<span class="t" style="left:1019.50px;top:1036.00px;font-size:17.3px;line-height:17.3px;color:#d0d1dc;font-weight:400;-webkit-text-stroke:0.2px #d0d1dc;transform:scaleX(1.0049);">et-0/5/2 - IXIA_11/3</span>
<span class="t" style="left:1505.40px;top:1036.00px;font-size:17.3px;line-height:17.3px;color:#d0d1dc;font-weight:400;-webkit-text-stroke:0.2px #d0d1dc;transform:scaleX(0.9300);">0</span>
<span class="t" style="left:1992.00px;top:1036.00px;font-size:17.3px;line-height:17.3px;color:#d0d1dc;font-weight:400;-webkit-text-stroke:0.2px #d0d1dc;transform:scaleX(0.9850);">1.36 Mp/s</span>
<span class="t" style="left:47.10px;top:1078.00px;font-size:17.3px;line-height:17.3px;color:#d0d1dc;font-weight:400;-webkit-text-stroke:0.2px #d0d1dc;transform:scaleX(1.0061);">2024-01-08 11:03:01</span>
<span class="t" style="left:532.80px;top:1078.00px;font-size:17.3px;line-height:17.3px;color:#d0d1dc;font-weight:400;-webkit-text-stroke:0.2px #d0d1dc;transform:scaleX(0.8653);">RED_DROP</span>
<span class="t" style="left:1019.50px;top:1078.00px;font-size:17.3px;line-height:17.3px;color:#d0d1dc;font-weight:400;-webkit-text-stroke:0.2px #d0d1dc;transform:scaleX(1.0049);">et-0/5/2 - IXIA_11/3</span>
<span class="t" style="left:1505.40px;top:1078.00px;font-size:17.3px;line-height:17.3px;color:#d0d1dc;font-weight:400;-webkit-text-stroke:0.2px #d0d1dc;transform:scaleX(0.9300);">0</span>
<span class="t" style="left:1992.00px;top:1078.00px;font-size:17.3px;line-height:17.3px;color:#d0d1dc;font-weight:400;-webkit-text-stroke:0.2px #d0d1dc;transform:scaleX(0.9850);">1.36 Mp/s</span>
<span class="t" style="left:47.10px;top:1119.00px;font-size:17.3px;line-height:17.3px;color:#d0d1dc;font-weight:400;-webkit-text-stroke:0.2px #d0d1dc;transform:scaleX(1.0061);">2024-01-08 11:03:31</span>
<span class="t" style="left:532.80px;top:1119.00px;font-size:17.3px;line-height:17.3px;color:#d0d1dc;font-weight:400;-webkit-text-stroke:0.2px #d0d1dc;transform:scaleX(0.8653);">RED_DROP</span>
<span class="t" style="left:1019.50px;top:1119.00px;font-size:17.3px;line-height:17.3px;color:#d0d1dc;font-weight:400;-webkit-text-stroke:0.2px #d0d1dc;transform:scaleX(1.0049);">et-0/5/2 - IXIA_11/3</span>
<span class="t" style="left:1505.40px;top:1119.00px;font-size:17.3px;line-height:17.3px;color:#d0d1dc;font-weight:400;-webkit-text-stroke:0.2px #d0d1dc;transform:scaleX(0.9300);">0</span>
<span class="t" style="left:1992.00px;top:1119.00px;font-size:17.3px;line-height:17.3px;color:#d0d1dc;font-weight:400;-webkit-text-stroke:0.2px #d0d1dc;transform:scaleX(0.9850);">1.37 Mp/s</span>
<span class="t" style="left:47.10px;top:1160.00px;font-size:17.3px;line-height:17.3px;color:#d0d1dc;font-weight:400;-webkit-text-stroke:0.2px #d0d1dc;transform:scaleX(1.0061);">2024-01-08 11:04:01</span>
<span class="t" style="left:532.80px;top:1160.00px;font-size:17.3px;line-height:17.3px;color:#d0d1dc;font-weight:400;-webkit-text-stroke:0.2px #d0d1dc;transform:scaleX(0.8653);">RED_DROP</span>
<span class="t" style="left:1019.50px;top:1160.00px;font-size:17.3px;line-height:17.3px;color:#d0d1dc;font-weight:400;-webkit-text-stroke:0.2px #d0d1dc;transform:scaleX(1.0049);">et-0/5/2 - IXIA_11/3</span>
<span class="t" style="left:1505.40px;top:1160.00px;font-size:17.3px;line-height:17.3px;color:#d0d1dc;font-weight:400;-webkit-text-stroke:0.2px #d0d1dc;transform:scaleX(0.9300);">0</span>
<span class="t" style="left:1992.00px;top:1160.00px;font-size:17.3px;line-height:17.3px;color:#d0d1dc;font-weight:400;-webkit-text-stroke:0.2px #d0d1dc;transform:scaleX(0.9850);">1.36 Mp/s</span>
<span class="t" style="left:47.10px;top:1202.00px;font-size:17.3px;line-height:17.3px;color:#d0d1dc;font-weight:400;-webkit-text-stroke:0.2px #d0d1dc;transform:scaleX(1.0061);">2024-01-08 11:04:31</span>
<span class="t" style="left:532.80px;top:1202.00px;font-size:17.3px;line-height:17.3px;color:#d0d1dc;font-weight:400;-webkit-text-stroke:0.2px #d0d1dc;transform:scaleX(0.8653);">RED_DROP</span>
<span class="t" style="left:1019.50px;top:1202.00px;font-size:17.3px;line-height:17.3px;color:#d0d1dc;font-weight:400;-webkit-text-stroke:0.2px #d0d1dc;transform:scaleX(1.0049);">et-0/5/2 - IXIA_11/3</span>
<span class="t" style="left:1505.40px;top:1202.00px;font-size:17.3px;line-height:17.3px;color:#d0d1dc;font-weight:400;-webkit-text-stroke:0.2px #d0d1dc;transform:scaleX(0.9300);">0</span>
<span class="t" style="left:1992.00px;top:1202.00px;font-size:17.3px;line-height:17.3px;color:#d0d1dc;font-weight:400;-webkit-text-stroke:0.2px #d0d1dc;transform:scaleX(0.9850);">1.37 Mp/s</span>
<div class="a" style="left:1254.8px;top:105.49999999999999px;width:71.4px;height:71.4px;border-radius:50%;background:#ffffff;"></div>
<div class="a" style="left:1258.0px;top:108.69999999999999px;width:65px;height:65px;border-radius:50%;background:#7cab56;"></div>
<span class="t" style="left:1281.31px;top:125.00px;font-size:33.8px;line-height:33.8px;color:#ffffff;font-weight:400;-webkit-text-stroke:0.45px #ffffff;transform:scaleX(0.8400);-webkit-text-stroke:1px #ffffff;">1</span>
<div class="a" style="left:726.3px;top:399.2px;width:71.4px;height:71.4px;border-radius:50%;background:#ffffff;"></div>
<div class="a" style="left:729.5px;top:402.4px;width:65px;height:65px;border-radius:50%;background:#7cab56;"></div>
<span class="t" style="left:754.11px;top:419.00px;font-size:33.8px;line-height:33.8px;color:#ffffff;font-weight:400;-webkit-text-stroke:0.45px #ffffff;transform:scaleX(0.8400);-webkit-text-stroke:1px #ffffff;">2</span>
<div class="a" style="left:1612.3px;top:399.3px;width:71.4px;height:71.4px;border-radius:50%;background:#ffffff;"></div>
<div class="a" style="left:1615.5px;top:402.5px;width:65px;height:65px;border-radius:50%;background:#7cab56;"></div>
<span class="t" style="left:1640.11px;top:419.00px;font-size:33.8px;line-height:33.8px;color:#ffffff;font-weight:400;-webkit-text-stroke:0.45px #ffffff;transform:scaleX(0.8400);-webkit-text-stroke:1px #ffffff;">3</span>
<div class="a" style="left:1255.3px;top:828.3px;width:71.4px;height:71.4px;border-radius:50%;background:#ffffff;"></div>
<div class="a" style="left:1258.5px;top:831.5px;width:65px;height:65px;border-radius:50%;background:#7cab56;"></div>
<span class="t" style="left:1283.11px;top:848.00px;font-size:33.8px;line-height:33.8px;color:#ffffff;font-weight:400;-webkit-text-stroke:0.45px #ffffff;transform:scaleX(0.8400);-webkit-text-stroke:1px #ffffff;">4</span>
<div class="a" style="left:13px;top:10px;width:2486px;height:1px;background:#06070a;"></div>
<div class="a" style="left:13px;top:1267px;width:2486px;height:1px;background:#06070a;"></div>
<div class="a" style="left:13px;top:10px;width:1px;height:1258px;background:#0a0b0e;"></div>
<div class="a" style="left:2498px;top:10px;width:1px;height:1258px;background:#06070a;"></div>
</body></html>
